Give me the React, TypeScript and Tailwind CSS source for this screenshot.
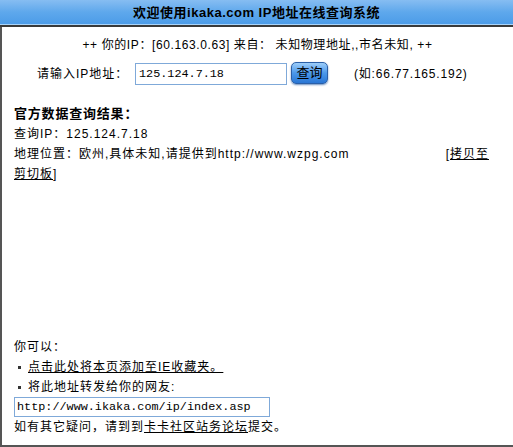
const FONT = "font-['Liberation_Sans','Noto_Sans_CJK_SC',sans-serif]";

export default function App() {
  return (
    <div className={`w-[513px] h-[447px] bg-white text-black text-[12px] tracking-[1px] overflow-hidden ${FONT}`}>
      {/* header bar */}
      <div className="h-[24px] bg-gradient-to-b from-[#86bdf2] via-[#5ea8ec] to-[#4c9ce8] flex items-center justify-center">
        <span className="text-[13px] font-bold tracking-[0.5px] leading-none">欢迎使用ikaka.com IP地址在线查询系统</span>
      </div>
      <div className="h-px bg-[#a9d4fa]" />
      <div className="h-[2px] bg-[#3a3a3a]" />

      <div className="h-[420px] border-l-2 border-b-2 border-[#555555] flex flex-col">
        <div className="h-[34px] flex items-center justify-center pt-[2px] tracking-[0.6px]">
          ++ 你的IP：[60.163.0.63] 来自： 未知物理地址,,市名未知, ++
        </div>

        <div className="flex items-center h-[26px] pl-[35px]">
          <span className="w-[98px]">请输入IP地址：</span>
          <input
            readOnly
            value="125.124.7.18"
            className="w-[152px] h-[22px] border border-[#7fa9d9] px-[3px] text-[11.8px] font-['Liberation_Mono',monospace] tracking-normal outline-none"
          />
          <button className="ml-[4px] -mt-[3px] w-[37px] h-[22px] rounded-[5px] border border-[#2a5fa8] bg-gradient-to-b from-[#9ccdf9] via-[#4b98ea] to-[#2a76d4] text-[13px] leading-none tracking-normal shadow-[0_1px_2px_#6a8fc0]">
            查询
          </button>
          <span className="ml-[26px] tracking-[0.8px]">(如:66.77.165.192)</span>
        </div>

        <div className="pl-[12px] pr-[24px] mt-[17px] leading-[20px]">
          <div className="font-bold text-[13px] tracking-[0.8px]">官方数据查询结果：</div>
          <div>查询IP：125.124.7.18</div>
          <div className="flex justify-between">
            <span>地理位置：欧州,具体未知,请提供到http://www.wzpg.com</span>
            <span>[<span className="underline">拷贝至</span></span>
          </div>
          <div><span className="underline">剪切板</span>]</div>
        </div>

        <div className="flex-1" />

        <div className="pl-[12px] pb-[8px] leading-[20px]">
          <div>你可以：</div>
          <div className="flex items-center">
            <span className="w-[3px] h-[3px] bg-[#333333] ml-[4px] mr-[7px]" />
            <span className="underline">点击此处将本页添加至IE收藏夹。</span>
          </div>
          <div className="flex items-center">
            <span className="w-[3px] h-[3px] bg-[#333333] ml-[4px] mr-[7px]" />
            <span>将此地址转发给你的网友:</span>
          </div>
          <input
            readOnly
            value="http://www.ikaka.com/ip/index.asp"
            className="block w-[256px] h-[20px] border border-[#7fa9d9] px-[2px] text-[11.8px] font-['Liberation_Mono',monospace] tracking-normal outline-none"
          />
          <div>
            如有其它疑问，请到到<span className="underline">卡卡社区站务论坛</span>提交。
          </div>
        </div>
      </div>
    </div>
  );
}
